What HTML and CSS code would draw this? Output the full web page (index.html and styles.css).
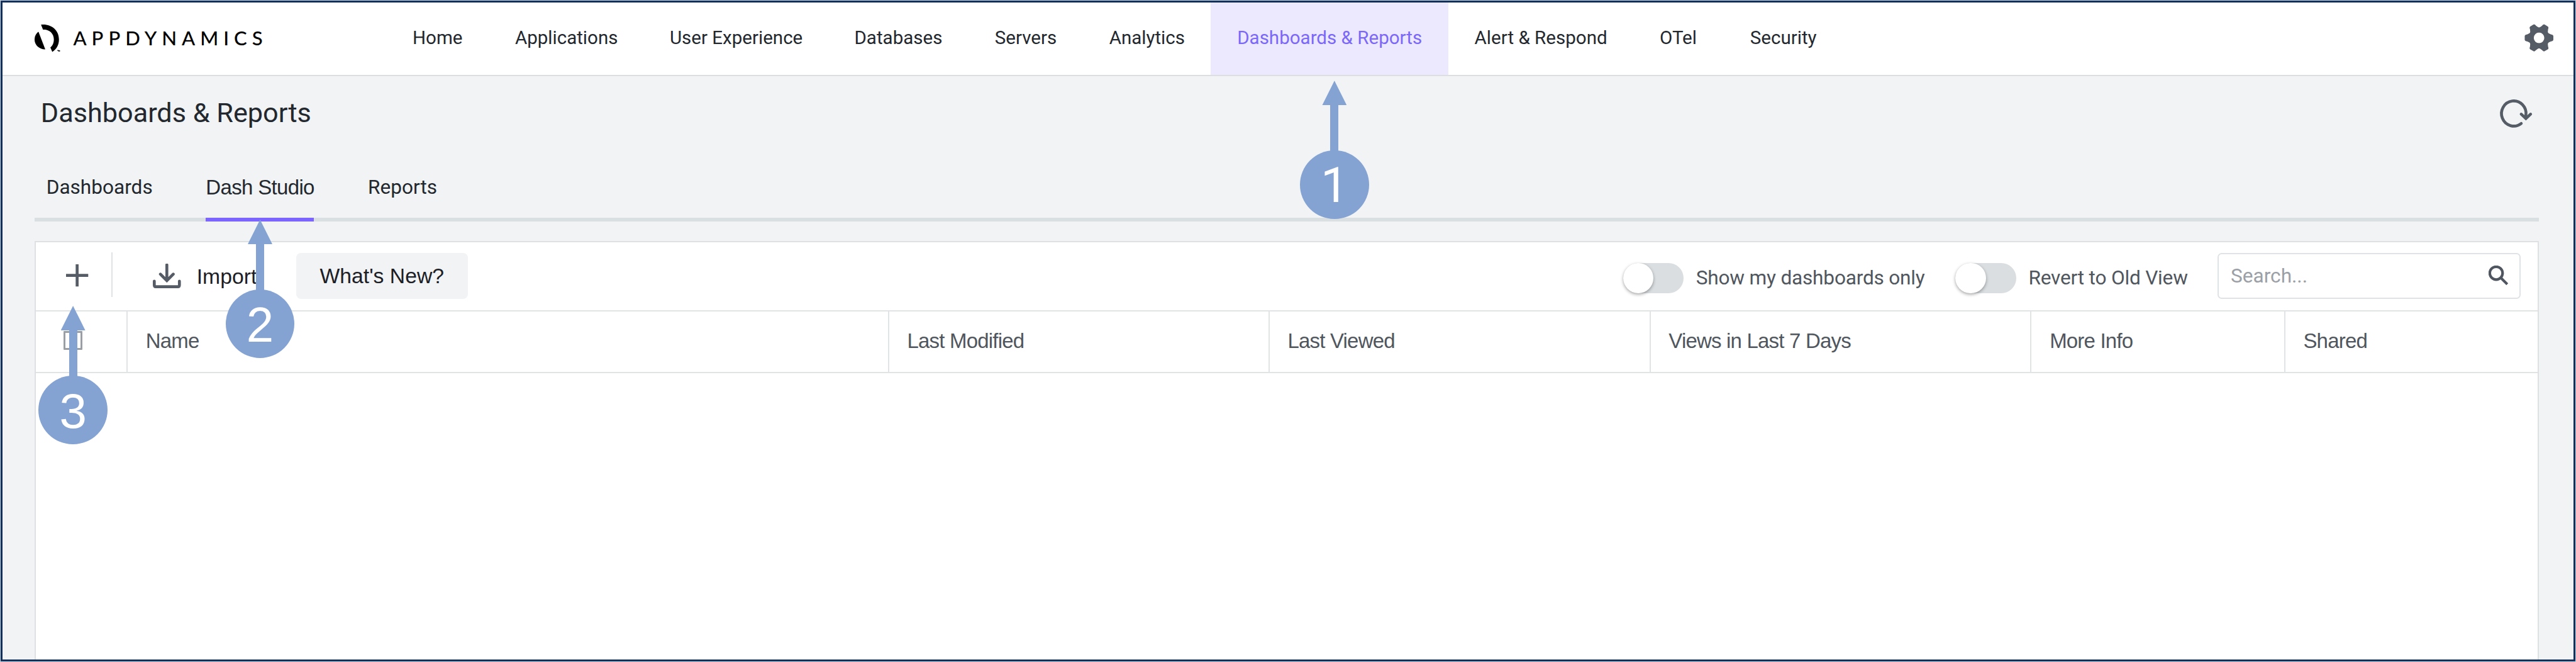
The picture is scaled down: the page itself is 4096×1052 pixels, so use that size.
FILE: index.html
```html
<!DOCTYPE html>
<html lang="en">
<head>
<meta charset="utf-8">
<title>Dashboards &amp; Reports</title>
<link rel="stylesheet" href="styles.css">
</head>
<body>
<div class="frame">
  <header class="topbar">
    <div class="logo">
      <svg class="logo-mark" viewBox="0 0 44 48"><path d="M11 .3C28 -1.500 41.700 9 41.700 25.800C41.700 35 37.500 42 30.300 46.800L27 39.200C31 36 33 31 33 25.800C33 15 24.500 8 14.500 8.800Z"/><path d="M6.700 12.500L18.300 42.500C8 42 0 35 0 26C0 20 2.500 15.500 6.700 12.500Z"/><path d="M39 43.500H41V45H39ZM40.500 44H43.500V46H40.500Z"/></svg>
      <span class="logo-word">APPDYNAMICS</span>
    </div>
    <nav class="nav">
      <a class="w-home">Home</a><a class="w-app">Applications</a><a class="w-ux">User Experience</a><a class="w-db">Databases</a><a class="w-srv">Servers</a><a class="w-an">Analytics</a><a class="w-dash active">Dashboards &amp; Reports</a><a class="w-alert">Alert &amp; Respond</a><a class="w-otel">OTel</a><a class="w-sec">Security</a>
    </nav>
    <svg class="gear" viewBox="-25 -25 50 50"><g class="gear-teeth"><path id="tooth" d="M-9 -14L-6 -20.500Q-5.500 -24.500 -3 -24.500H3Q5.500 -24.500 6 -20.500L9 -14Z" transform="rotate(90)"/><use href="#tooth" transform="rotate(60)"/><use href="#tooth" transform="rotate(120)"/><use href="#tooth" transform="rotate(180)"/><use href="#tooth" transform="rotate(240)"/><use href="#tooth" transform="rotate(300)"/></g><circle class="gear-ring" r="13.500"/></svg>
  </header>
  <main class="content">
    <div class="title-row">
      <h1>Dashboards &amp; Reports</h1>
      <svg class="refresh" viewBox="0 0 55 48"><path d="M36.500 39A21 21.500 0 1 1 44.500 25V30"/><path d="M36.500 23L44.500 30.500L52.500 23"/></svg>
    </div>
    <div class="tabs">
      <a class="tab tab-dash">Dashboards</a><a class="tab tab-studio active">Dash Studio</a><a class="tab tab-reports">Reports</a>
    </div>
    <section class="panel">
      <div class="toolbar">
        <svg class="plus" viewBox="0 0 38 38"><path d="M19 0V38M0 19H38"/></svg>
        <span class="divider"></span>
        <svg class="import-icon" viewBox="0 0 48 42"><path d="M24 2V27M13 18L24 29L35 18M2.500 30V36.500Q2.500 39.500 5.500 39.500H42.500Q45.500 39.500 45.500 36.500V30"/></svg>
        <span class="import">Import</span>
        <button class="whats-new">What's New?</button>
        <span class="toggle"></span><span class="toggle-label show-mine">Show my dashboards only</span>
        <span class="toggle"></span><span class="toggle-label revert">Revert to Old View</span>
        <div class="search"><span>Search...</span><svg class="search-icon" viewBox="0 0 34 34"><circle cx="13" cy="13" r="11"/><path d="M21 21L32 32"/></svg></div>
      </div>
      <div class="columns">
        <div class="check-cell"><span class="checkbox"></span></div><div>Name</div><div>Last Modified</div><div>Last Viewed</div><div>Views in Last 7 Days</div><div>More Info</div><div>Shared</div>
      </div>
      <div class="rows"></div>
    </section>
  </main>
</div>
<div class="callout c1"><i class="head"></i><i class="shaft"></i><b>1</b></div>
<div class="callout c2"><i class="head"></i><i class="shaft"></i><b>2</b></div>
<div class="callout c3"><i class="head"></i><i class="shaft"></i><b>3</b></div>
</body>
</html>
```
FILE: styles.css
```css
* { box-sizing: border-box; }
html { font-size: 9.2922px; background: #c9d5df; }
body { margin: 0; position: relative; width: 100vw; height: 100vh; overflow: hidden; font-family: Roboto, sans-serif; color: #23282e; white-space: nowrap; }
.frame { display: flex; flex-direction: column; margin: 1px; width: calc(100vw - 2px); height: calc(100vh - 2px); border: 3px solid #12305a; background: #f1f3f5; overflow: hidden; }
.topbar { flex: none; display: flex; align-items: stretch; height: 12.6rem; background: #fff; border-bottom: 2px solid #dcdfe2; }
.logo { flex: none; width: 65.6rem; display: flex; align-items: flex-start; padding: 3.8rem 0 0 5.5rem; }
.logo-mark { width: 4.4rem; height: 4.8rem; fill: #000; overflow: visible; }
.logo-word { margin-left: 2.2rem; font: 500 3.35rem/4.6rem Lato, sans-serif; letter-spacing: .86rem; color: #000; }
.nav { display: flex; font-size: 3.18rem; }
.nav a { display: flex; justify-content: center; line-height: 12.1rem; height: 12.4rem; padding-left: .1rem; }
.w-home { width: 17.6rem; } .w-app { width: 26.5rem; } .w-ux { width: 31.6rem; } .w-db { width: 23.9rem; } .w-srv { width: 19.7rem; } .w-an { width: 21.8rem; } .w-dash { width: 40.7rem; } .w-alert { width: 31.6rem; } .w-otel { width: 15.4rem; } .w-sec { width: 20.6rem; }
.nav .active { background: #ece9fe; color: #7b68f8; }
.gear { width: 5rem; height: 5rem; margin: 3.5rem 3.4rem 0 auto; }
.gear-teeth { fill: #555c66; }
.gear-ring { fill: #fff; stroke: #555c66; stroke-width: 9; }
.content { flex: 1; display: flex; flex-direction: column; padding: 0 5.9rem 0 5.5rem; }
.title-row { flex: none; display: flex; justify-content: space-between; height: 14.9rem; }
h1 { margin: 3.35rem 0 0 1.05rem; font-weight: 400; font-size: 4.65rem; line-height: 6rem; }
.refresh { width: 5.5rem; height: 4.8rem; margin: 4.2rem 1.2rem 0 0; fill: none; stroke: #555c66; stroke-width: 5; stroke-linecap: round; overflow: visible; }
.tabs { flex: none; display: flex; height: 9.9rem; border-bottom: .7rem solid #dadfe2; font-size: 3.4rem; line-height: 4rem; padding-top: 2.1rem; }
.tab { height: 7.8rem; text-align: center; }
.tab-dash { margin-left: 2rem; width: 18.1rem; }
.tab-studio { margin-left: 9.2rem; width: 18.5rem; border-bottom: .7rem solid #7b64ff; font-family: "Liberation Sans", sans-serif; font-size: 3.55rem; letter-spacing: -.07rem; }
.tab-reports { margin-left: 9.2rem; width: 11.9rem; }
.panel { flex: 1; display: flex; flex-direction: column; margin-top: 3.4rem; background: #fff; border: 2px solid #dde1e3; border-bottom: 0; color: #50565d; }
.toolbar { flex: none; display: flex; align-items: flex-start; height: 11.8rem; padding-top: .1rem; border-bottom: 2px solid #e0e4e5; }
.plus { width: 3.8rem; height: 3.8rem; margin: 3.7rem 0 0 5.2rem; fill: none; stroke: #555c66; stroke-width: 5; }
.divider { width: 2px; height: 7.7rem; margin: 1.6rem 0 0 3.9rem; background: #dfe3e5; }
.import-icon { width: 4.8rem; height: 4.2rem; margin: 3.6rem 0 0 6.9rem; fill: none; stroke: #555c66; stroke-width: 5; stroke-linecap: round; }
.import { margin: 3.75rem 0 0 2.7rem; width: 17rem; font: 3.63rem/4rem "Liberation Sans", sans-serif; color: #1c2026; }
.whats-new { width: 29.4rem; height: 7.8rem; margin: 1.75rem 0 0; padding: 0; border: 0; border-radius: .8rem; background: #f1f3f5; font: 3.63rem/7.8rem "Liberation Sans", sans-serif; color: #1c2026; }
.toggle { flex: none; width: 10.4rem; height: 5.2rem; margin-top: 3.4rem; border-radius: 2.6rem; background: #dadee1; }
.whats-new + .toggle { margin-left: auto; }
.toggle::before { content: ""; display: block; width: 5.2rem; height: 5.2rem; border-radius: 50%; background: #fff; box-shadow: 0 2px 5px rgba(0,0,0,.35); }
.toggle-label { margin: 4rem 0 0 2.1rem; font-size: 3.4rem; letter-spacing: -.02rem; line-height: 4rem; }
.show-mine { width: 44.4rem; }
.revert { width: 32.4rem; }
.search { flex: none; display: flex; justify-content: space-between; width: 51.8rem; height: 7.8rem; margin: 1.75rem 2.95rem 0 0; padding: 1.7rem 1.8rem 0 2rem; border: 2px solid #dfe3e5; border-radius: .7rem; font-size: 3.4rem; line-height: 4rem; color: #9ba0a6; }
.search-icon { width: 3.4rem; height: 3.4rem; margin-top: .2rem; fill: none; stroke: #4f565f; stroke-width: 4.5; }
.columns { flex: none; display: grid; grid-template-columns: 15.7rem 130.3rem 65.1rem 65.2rem 65.2rem 43.4rem 1fr; height: 10.6rem; border-bottom: 2px solid #e0e4e5; font: 3.55rem/10.15rem "Liberation Sans", sans-serif; letter-spacing: -.085rem; }
.columns > div { border-right: 2px solid #e0e4e5; padding-left: 3.1rem; }
.columns > div:last-child { border-right: 0; }
.columns > .check-cell { padding: 3.4rem 0 0 4.7rem; }
.checkbox { display: block; width: 3.2rem; height: 3.2rem; border: 3px solid #9a9fa5; border-radius: 1px; }
.callout { position: absolute; width: 11.8rem; height: 23.7rem; display: flex; flex-direction: column; align-items: center; }
.head { flex: none; width: 4.2rem; height: 4.2rem; background: #84a3d3; clip-path: polygon(50% 0, 100% 100%, 0 100%); }
.shaft { flex: none; width: 1.4rem; height: 7.9rem; background: #84a3d3; }
.callout b { flex: none; width: 11.8rem; height: 11.8rem; margin-top: -.2rem; border-radius: 50%; background: #84a3d3; color: #fff; text-align: center; font: 400 8.4rem/12.1rem "Liberation Sans", sans-serif; }
.c1 { left: 222.45rem; top: 13.8rem; }
.c1 b { font-family: Roboto, sans-serif; }
.c2 { left: 38.6rem; top: 37.55rem; }
.c3 { left: 6.6rem; top: 52.3rem; }
```
